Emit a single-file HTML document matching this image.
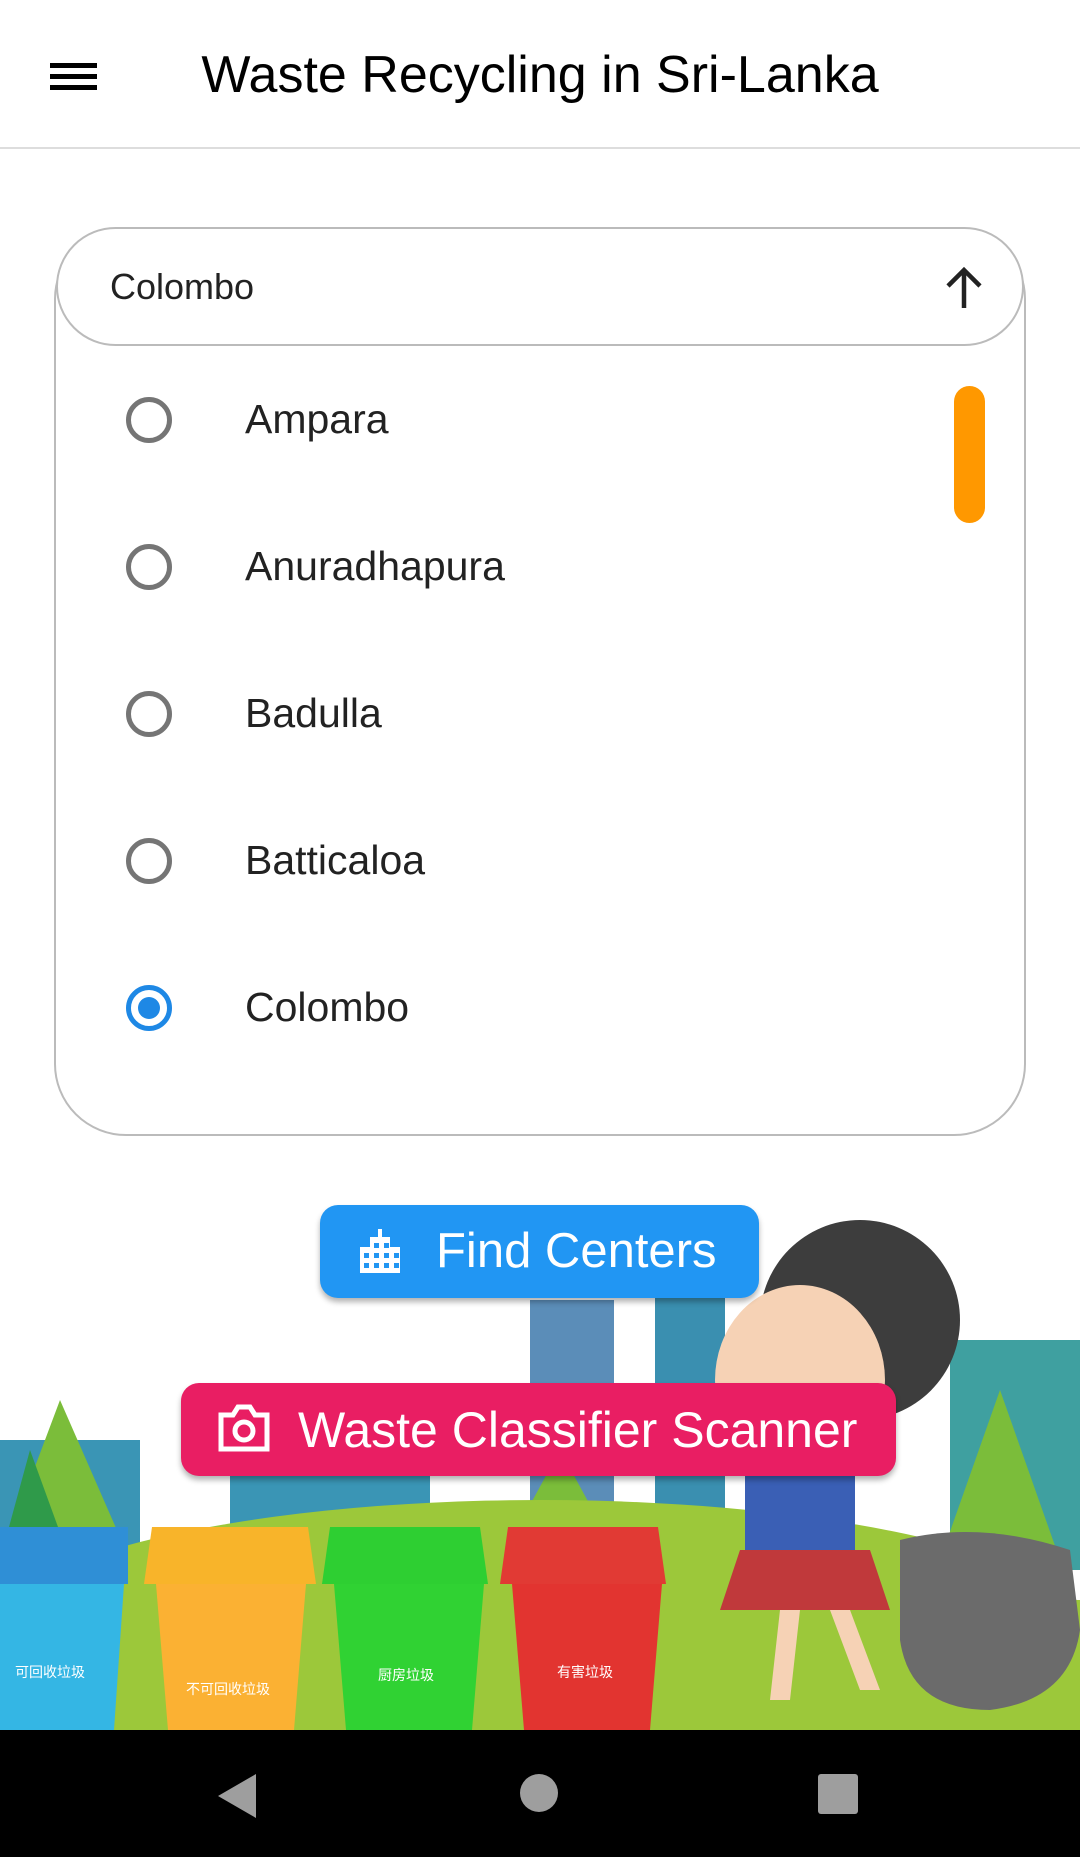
<!DOCTYPE html>
<html><head><meta charset="utf-8"><style>
body{margin:0;width:1080px;height:1857px;position:relative;background:#fff;font-family:"Liberation Sans","Noto Sans CJK SC",sans-serif;overflow:hidden}
.hdr{position:absolute;left:0;top:0;width:1080px;height:147px;border-bottom:2px solid #ddd;background:#fff}
.ham{position:absolute;left:50px;width:47px;height:5px;background:#000}
.title{position:absolute;left:0;width:1080px;text-align:center;top:45px;font-size:52px;font-weight:500;color:#000}
.card{position:absolute;left:54px;top:227px;width:968px;height:905px;border:2px solid #bbb;border-radius:72px;background:#fff}
.field{position:absolute;left:56px;top:227px;width:964px;height:115px;border:2px solid #bbb;border-radius:60px;background:#fff}
.fieldtxt{position:absolute;left:110px;top:266px;font-size:36px;color:#222}
.item{position:absolute;left:245px;font-size:41px;color:#222}
.radio{position:absolute;left:126px;width:46px;height:46px;border:5px solid #757575;border-radius:50%;box-sizing:border-box}
.btn{position:absolute;color:#fff;font-weight:500;box-shadow:0 4px 6px rgba(0,0,0,.3);border-radius:18px}
.nav{position:absolute;left:0;top:1730px;width:1080px;height:127px;background:#000}
</style></head><body>
<div class="hdr">
<div class="ham" style="top:63px"></div><div class="ham" style="top:74px"></div><div class="ham" style="top:85px"></div>
<div class="title">Waste Recycling in Sri-Lanka</div>
</div>
<div class="card"></div>
<div class="field"></div>
<div class="fieldtxt">Colombo</div>
<svg style="position:absolute;left:940px;top:264px" width="48" height="48" viewBox="0 0 48 48"><path d="M24 44V6M8 22L24 6L40 22" stroke="#222" stroke-width="4.5" fill="none"/></svg>
<div style="position:absolute;left:954px;top:386px;width:31px;height:137px;border-radius:16px;background:#ff9800"></div>
<div class="radio" style="top:397px"></div><div class="item" style="top:396px">Ampara</div>
<div class="radio" style="top:544px"></div><div class="item" style="top:543px">Anuradhapura</div>
<div class="radio" style="top:691px"></div><div class="item" style="top:690px">Badulla</div>
<div class="radio" style="top:838px"></div><div class="item" style="top:837px">Batticaloa</div>
<div class="radio" style="top:985px;border-color:#1e88e5"><div style="position:absolute;left:7px;top:7px;width:22px;height:22px;border-radius:50%;background:#1e88e5"></div></div><div class="item" style="top:984px">Colombo</div>

<svg style="position:absolute;left:0;top:1184px" width="1080" height="546" viewBox="0 1184 1080 546">
<rect x="530" y="1300" width="84" height="260" fill="#5b8db8"/>
<rect x="655" y="1280" width="70" height="280" fill="#3a8fb0"/>
<rect x="950" y="1340" width="130" height="230" fill="#3fa0a0"/>
<rect x="230" y="1440" width="200" height="120" fill="#3a95b5"/>
<rect x="0" y="1440" width="140" height="120" fill="#3a95b5"/>
<path d="M60 1400 L130 1560 L0 1560 Z" fill="#7bbd3a"/>
<path d="M30 1450 L70 1560 L0 1560Z" fill="#2f9a4a"/>
<path d="M1000 1390 L1060 1560 L940 1560Z" fill="#7bbd3a"/>
<path d="M560 1450 L620 1560 L500 1560Z" fill="#7bbd3a"/>
<ellipse cx="540" cy="1640" rx="560" ry="140" fill="#9cc83a"/>
<rect x="0" y="1600" width="1080" height="130" fill="#9cc83a"/>
<circle cx="860" cy="1320" r="100" fill="#3d3d3d"/>
<ellipse cx="800" cy="1380" rx="85" ry="95" fill="#f6d2b5"/>
<path d="M745 1460 h110 v140 h-110z" fill="#3a5fb5"/>
<path d="M740 1550 h130 l20 60 h-170z" fill="#c0393b"/>
<path d="M780 1610 l-10 90 h20 l10 -90zM830 1610 l30 80 h20 l-30 -80z" fill="#f6d2b5"/>
<path d="M900 1540 q80 -20 170 10 l10 80 q-10 70 -90 80 q-80 0 -90 -70z" fill="#6b6b6b"/>
<g>
<path d="M0 1527 h128 v57 h-128z" fill="#2f8fd6"/><path d="M0 1584 h124 l-10 146 h-114z" fill="#34b6e4"/>
<path d="M152 1527 h156 l8 57 h-172z" fill="#f8b42a"/><path d="M156 1584 h150 l-12 146 h-126z" fill="#fbb133"/>
<path d="M330 1527 h150 l8 57 h-166z" fill="#2ecf32"/><path d="M334 1584 h150 l-12 146 h-126z" fill="#30d233"/>
<path d="M508 1527 h150 l8 57 h-166z" fill="#e13a34"/><path d="M512 1584 h150 l-12 146 h-126z" fill="#e23430"/>
</g>
<g fill="#fff" font-size="14" text-anchor="middle">
<text x="50" y="1677">可回收垃圾</text><text x="228" y="1694">不可回收垃圾</text><text x="406" y="1680">厨房垃圾</text><text x="585" y="1677">有害垃圾</text>
</g>
</svg>

<div class="btn" style="left:320px;top:1205px;width:439px;height:93px;background:#2196f3;font-size:49px">
<svg style="position:absolute;left:38px;top:22px" width="48" height="48" viewBox="0 0 48 48"><path d="M2 46V20h10V10h8V2h4v8h8v10h10v26z" fill="#fff"/><g fill="#2196f3"><rect x="6" y="26" width="5" height="5"/><rect x="16" y="26" width="5" height="5"/><rect x="26" y="26" width="5" height="5"/><rect x="36" y="26" width="5" height="5"/><rect x="6" y="36" width="5" height="5"/><rect x="16" y="36" width="5" height="5"/><rect x="26" y="36" width="5" height="5"/><rect x="36" y="36" width="5" height="5"/><rect x="16" y="16" width="5" height="5"/><rect x="26" y="16" width="5" height="5"/></g></svg>
<div style="position:absolute;left:116px;top:18px">Find Centers</div></div>
<div class="btn" style="left:181px;top:1383px;width:715px;height:93px;background:#e91e63;font-size:50px">
<svg style="position:absolute;left:36px;top:20px" width="54" height="50" viewBox="0 0 54 50"><path d="M4 12h12l5-8h12l5 8h12v34H4z" fill="none" stroke="#fff" stroke-width="5"/><circle cx="27" cy="28" r="9" fill="none" stroke="#fff" stroke-width="5"/></svg>
<div style="position:absolute;left:117px;top:18px">Waste Classifier Scanner</div></div>

<div class="nav">
<svg style="position:absolute;left:218px;top:44px" width="40" height="44"><path d="M38 0V44L0 22Z" fill="#9e9e9e"/></svg>
<div style="position:absolute;left:520px;top:44px;width:38px;height:38px;border-radius:50%;background:#9e9e9e"></div>
<div style="position:absolute;left:818px;top:44px;width:40px;height:40px;border-radius:3px;background:#9e9e9e"></div>
</div>
</body></html>
